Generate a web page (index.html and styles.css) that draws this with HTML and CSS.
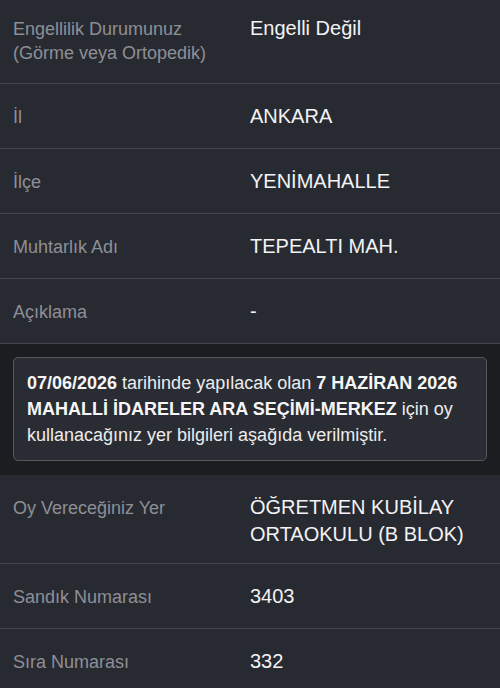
FILE: index.html
```html
<!DOCTYPE html>
<html lang="tr">

<head>
    <meta charset="UTF-8">
    <meta name="viewport" content="width=device-width, initial-scale=1.0">
    <title>Seçmen Bilgileri</title>
    <link rel="stylesheet" href="styles.css">
</head>

<body>
    <div class="page">
        <div class="info-list first">
            <div class="info-row">
                <div class="label">Engellilik Durumunuz<br>(Görme veya Ortopedik)</div>
                <div class="value">Engelli Değil</div>
            </div>
            <div class="info-row">
                <div class="label">İl</div>
                <div class="value">ANKARA</div>
            </div>
            <div class="info-row">
                <div class="label">İlçe</div>
                <div class="value">YENİMAHALLE</div>
            </div>
            <div class="info-row">
                <div class="label">Muhtarlık Adı</div>
                <div class="value">TEPEALTI MAH.</div>
            </div>
            <div class="info-row">
                <div class="label">Açıklama</div>
                <div class="value">-</div>
            </div>
        </div>

        <div class="notice-section">
            <div class="notice">
                <b>07/06/2026</b> tarihinde yapılacak olan <b>7 HAZİRAN 2026 MAHALLİ İDARELER ARA SEÇİMİ-MERKEZ</b> için oy kullanacağınız yer bilgileri aşağıda verilmiştir.
            </div>
        </div>

        <div class="info-list">
            <div class="info-row multi">
                <div class="label">Oy Vereceğiniz Yer</div>
                <div class="value">ÖĞRETMEN KUBİLAY ORTAOKULU (B BLOK)</div>
            </div>
            <div class="info-row">
                <div class="label">Sandık Numarası</div>
                <div class="value">3403</div>
            </div>
            <div class="info-row">
                <div class="label">Sıra Numarası</div>
                <div class="value">332</div>
            </div>
        </div>
    </div>
</body>

</html>
```

FILE: styles.css
```css
body {
    margin: 0;
    background-color: #282a32;
    font-family: 'Liberation Sans', Arial, sans-serif;
    overflow: hidden;
}

.page {
    width: 500px;
}

.info-list {
    background-color: #282a32;
}

.info-list.first {
    margin-top: -4px;
}

.info-row {
    display: flex;
    align-items: baseline;
    padding: 19px 13px 18px 13px;
    border-bottom: 1px solid #45474f;
}

.info-row.multi {
    padding-bottom: 15px;
}

.info-list .info-row:last-child {
    border-bottom: none;
}

.info-list.first .info-row:last-child {
    border-bottom: 1px solid #45474f;
}

.label {
    width: 237px;
    flex-shrink: 0;
    font-size: 18px;
    line-height: 24px;
    color: #8e8f95;
}

.value {
    flex: 1;
    font-size: 20px;
    line-height: 27px;
    color: #f3f3f4;
    padding-right: 20px;
}

.notice-section {
    background-color: #1c1d21;
    padding: 13px 13px 14px 13px;
}

.notice {
    background-color: #2a2c33;
    border: 1px solid #56585e;
    border-radius: 5px;
    padding: 12px 13px;
    font-size: 18px;
    line-height: 26px;
    color: #ececee;
}

.notice b {
    color: #f6f6f7;
}
```
